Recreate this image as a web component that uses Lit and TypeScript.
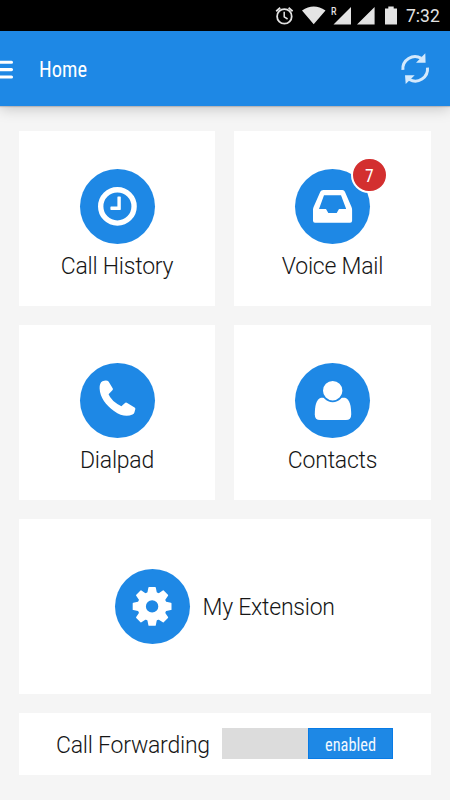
import { LitElement, html, svg, css } from "lit";
import { customElement, property } from "lit/decorators.js";

const gearTeeth = [0, 45, 90, 135, 180, 225, 270, 315];

const glyphs: Record<string, unknown> = {
  clock: svg`
    <circle cx="37.4" cy="37.4" r="16.7" fill="none" stroke="#fff" stroke-width="5.4"/>
    <path d="M37.4 28.2q0-.6.6-.6h2.2q.6 0 .6.6v12.1q0 .6-.6.6H31q-.6 0-.6-.6v-2.1q0-.6.6-.6h6.4z" fill="#fff"/>`,
  inbox: svg`
    <path fill="#fff" fill-rule="evenodd" d="M28.4 21h19q1.8 0 2.5 1.7l6.5 15q.7 1.6.7 3v11q0 2-2 2H20q-2 0-2-2v-11q0-1.4.7-3l6.6-15q.7-1.7 3.1-1.7zM29 26.3 24 39.9h7l2.3 4.1h8.4l2.3-4.1h7.2l-5.2-13.6z"/>`,
  phone: svg`
    <path fill="#fff" d="M22.4 18.3Q25 17.2 27.4 17.7Q28.4 18 29 19.3L32.8 25.6Q33.2 26.6 32.4 27.2L28.6 31.2Q31 37.8 41.4 43.3L45 39.9Q45.8 39.3 46.8 39.8L54.6 44.4Q55.6 45 55.3 46.2L54.4 49.6Q54 51 52.5 51.6C47 54 41 53 34 48C26 42.3 20 34.5 19.6 25.5Q19.4 20 22.4 18.3z"/>`,
  person: svg`
    <path fill="#fff" d="M26 34.7Q31 34.7 38 34.7T50 34.7C54.8 36 56.2 43 56.2 51.5Q56.2 57 51 57H25Q19.8 57 19.8 51.5C19.8 43 21.2 36 26 34.7z"/>
    <circle cx="37.7" cy="27.7" r="10.6" fill="#fff" stroke="#1e88e5" stroke-width="1.8"/>`,
  gear: svg`
    <circle cx="37.1" cy="37.4" r="10.4" fill="none" stroke="#fff" stroke-width="8.4"/>
    ${gearTeeth.map(
      (a) => svg`<path fill="#fff" transform="rotate(${a} 37.1 37.4)" d="M32 25.5 33.4 18.6Q33.5 18 34.1 18h6q.6 0 .7.6l1.4 6.9z"/>`
    )}`,
};

@customElement("round-icon")
class RoundIcon extends LitElement {
  @property() name = "clock";
  static styles = css`
    :host { display: block; width: 75px; height: 75px; border-radius: 50%; background: #1e88e5; flex: none; }
    svg { display: block; }
  `;
  render() {
    return html`<svg width="75" height="75" viewBox="0 0 75 75">${glyphs[this.name]}</svg>`;
  }
}

@customElement("app-root")
class AppRoot extends LitElement {
  static styles = css`
    :host { display: flex; flex-direction: column; width: 450px; height: 800px; overflow: hidden; background: #f5f5f5; color: #111; font-family: Roboto, sans-serif; }
    svg { display: block; }
    .status { height: 31px; flex: none; background: #000; display: flex; justify-content: flex-end; }
    .status-icons { flex: none; }
    .time { width: 44px; font-size: 17.5px; line-height: 33px; color: #e4e4e4; white-space: nowrap; }
    .header { height: 75px; flex: none; background: #1e88e5; box-shadow: 0 1px 1px rgba(0,0,30,.15), 0 2px 14px rgba(0,0,0,.22); display: flex; align-items: center; z-index: 1; }
    .menu { width: 39px; flex: none; }
    .title { color: #fff; font-size: 22.5px; line-height: 30px; flex: 1; padding-top: 1px; }
    .narrow { display: inline-block; font-stretch: condensed; transform-origin: 0 50%; transform: scaleX(.91); }
    .refresh { margin-right: 20px; }
    .grid { display: grid; grid-template-columns: 196px 197px; grid-template-rows: 175px 175px 175px 62px; gap: 19px; padding: 25px 19px; }
    .card { background: #fff; display: flex; flex-direction: column; align-items: center; padding-top: 38px; box-sizing: border-box; }
    .label { font-weight: 300; font-size: 23px; line-height: 28px; white-space: nowrap; letter-spacing: -.23px; color: #161616; }
    .card .label { margin-top: 9px; }
    .wide { grid-column: 1 / 3; background: #fff; display: flex; align-items: center; }
    .extension { padding-left: 95.5px; gap: 13px; }
    .forward { padding-left: 37px; }
    .wide .label { padding-top: 2px; }
    .forward .label { width: 166px; padding-top: 4px; }
    .icon-wrap { position: relative; }
    .badge { position: absolute; left: 56px; top: -12.5px; width: 32.5px; height: 32.5px; border: 2.5px solid #fff; border-radius: 50%; background: #d32f2f; color: #fff; font-size: 17.5px; line-height: 34px; text-align: center; }
    .badge .narrow { transform: none; }
    .toggle { width: 171px; height: 31px; display: flex; background: #dcdcdc; margin-top: -1px; }
    .on { margin-left: auto; width: 85px; box-sizing: border-box; border: 1px solid #087be6; background: #1e88e5; color: #f2f8ff; font-size: 18px; line-height: 31px; padding-left: 15.5px; white-space: nowrap; }
  `;

  tile(name: string, label: string, count = 0) {
    return html`<div class="card">
      <div class="icon-wrap">
        <round-icon name=${name}></round-icon>
        ${count ? html`<div class="badge"><span class="narrow">${count}</span></div>` : ""}
      </div>
      <div class="label">${label}</div>
    </div>`;
  }

  render() {
    return html`
      <div class="status">
        <svg class="status-icons" width="136" height="31" viewBox="270 0 136 31">
          <g fill="none" stroke="#e4e4e4" stroke-width="1.8">
            <circle cx="284.4" cy="16.4" r="7.3"/>
            <path d="M284.2 11.8v5l3.4 2.2" stroke-width="1.5"/>
            <path d="M276.2 11.2l4-3.4M292.6 11.2l-4-3.4"/>
          </g>
          <path fill="#e4e4e4" d="M302 10.4Q313.7 2.8 325.5 10.4L313.7 24.3zM333.5 24.5 351 7v17.5zM357 24.5 374.6 7v17.5zM385 8.6h3.3V6.4h5.4v2.2h3.3v15.9h-12z"/>
          <text x="331" y="15" fill="#e4e4e4" font-size="10.5" font-weight="500" textLength="5.5" lengthAdjust="spacingAndGlyphs">R</text>
        </svg>
        <div class="time">7:32</div>
      </div>
      <div class="header">
        <svg class="menu" width="39" height="24" viewBox="0 0 39 24">
          <path d="M-4 5.2h15.5M-4 12.6h15.5M-4 20h15.5" stroke="#fff" stroke-width="3.1" stroke-linecap="round"/>
        </svg>
        <div class="title"><span class="narrow">Home</span></div>
        <svg class="refresh" width="30" height="34" viewBox="400 52 30 34">
          <g fill="none" stroke="#d4e9fc" stroke-width="3">
            <path d="M402.9 69.8A12.2 12.2 0 0 1 421.3 58.3"/>
            <path d="M427.5 67.7A12.2 12.2 0 0 1 409.4 79.5"/>
          </g>
          <path fill="#d4e9fc" d="M425.3 53.2 425.6 62.7 416 62.7zM405 75.2h9.7l-9 8.7z"/>
        </svg>
      </div>
      <div class="grid">
        ${this.tile("clock", "Call History")}
        ${this.tile("inbox", "Voice Mail", 7)}
        ${this.tile("phone", "Dialpad")}
        ${this.tile("person", "Contacts")}
        <div class="wide extension">
          <round-icon name="gear"></round-icon>
          <div class="label">My Extension</div>
        </div>
        <div class="wide forward">
          <div class="label">Call Forwarding</div>
          <div class="toggle"><div class="on"><span class="narrow">enabled</span></div></div>
        </div>
      </div>`;
  }
}
